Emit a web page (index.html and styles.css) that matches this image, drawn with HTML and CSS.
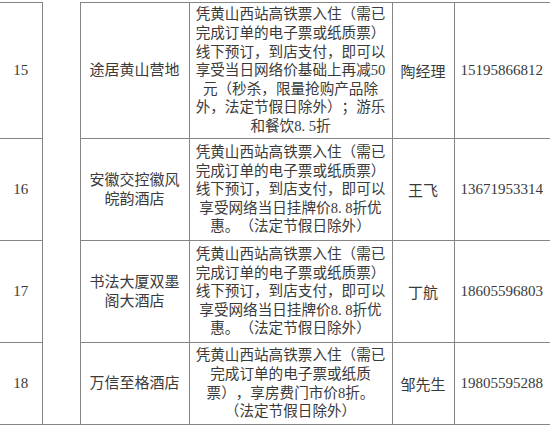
FILE: index.html
```html
<!DOCTYPE html>
<html lang="zh">
<head>
<meta charset="utf-8">
<link rel="stylesheet" href="styles.css">
</head>
<body>
<table class="grid">
  <colgroup>
    <col class="c-no"><col class="c-blank"><col class="c-name"><col class="c-desc"><col class="c-contact"><col class="c-phone">
  </colgroup>
  <tr class="r15">
    <td class="no">15</td>
    <td class="merged" rowspan="4"></td>
    <td class="name">途居黄山营地</td>
    <td class="desc">凭黄山西站高铁票入住（需已<br>完成订单的电子票或纸质票）<br>线下预订，到店支付，即可以<br>享受当日网络价基础上再减50<br>元（秒杀，限量抢购产品除<br>外，法定节假日除外）；游乐<br>和餐饮8<span class="dot">.</span>5折</td>
    <td class="contact">陶经理</td>
    <td class="phone">15195866812</td>
  </tr>
  <tr class="r16">
    <td class="no">16</td>
    <td class="name">安徽交控徽风<br>皖韵酒店</td>
    <td class="desc">凭黄山西站高铁票入住（需已<br>完成订单的电子票或纸质票）<br>线下预订，到店支付，即可以<br>享受网络当日挂牌价8<span class="dot">.</span>8折优<br>惠。（法定节假日除外）</td>
    <td class="contact">王飞</td>
    <td class="phone">13671953314</td>
  </tr>
  <tr class="r17">
    <td class="no">17</td>
    <td class="name">书法大厦双墨<br>阁大酒店</td>
    <td class="desc">凭黄山西站高铁票入住（需已<br>完成订单的电子票或纸质票）<br>线下预订，到店支付，即可以<br>享受网络当日挂牌价8<span class="dot">.</span>8折优<br>惠。（法定节假日除外）</td>
    <td class="contact">丁航</td>
    <td class="phone">18605596803</td>
  </tr>
  <tr class="r18">
    <td class="no">18</td>
    <td class="name">万信至格酒店</td>
    <td class="desc">凭黄山西站高铁票入住（需已<br>完成订单的电子票或纸质<br>票），享房费门市价8折。<br>（法定节假日除外）</td>
    <td class="contact">邹先生</td>
    <td class="phone">19805595288</td>
  </tr>
</table>
</body>
</html>
```
FILE: styles.css
```css
html, body {
  margin: 0;
  padding: 0;
  background: #ffffff;
}
body {
  width: 550px;
  height: 427px;
  overflow: hidden;
}
.grid {
  margin-top: 2px;
  border-collapse: collapse;
  table-layout: fixed;
  width: 553px;
  font-family: "Liberation Serif", "Noto Sans CJK SC", serif;
  color: #3a3a3a;
  text-spacing-trim: space-all;
}
.c-no { width: 42px; }
.c-blank { width: 38px; }
.c-name { width: 109px; }
.c-desc { width: 203px; }
.c-contact { width: 62px; }
.c-phone { width: 99px; }
.grid td {
  border: 1px solid #858585;
  padding: 0;
  text-align: center;
  vertical-align: middle;
}
.grid td.merged {
  border-top: none;
}
.grid td.no:first-child {
  border-left: none;
}
.r15 td { height: 135px; }
.r16 td { height: 101px; }
.r17 td { height: 101px; }
.r18 td { height: 81px; }
.no {
  font-size: 15px;
}
.name {
  font-size: 15px;
  line-height: 19px;
}
.desc {
  font-size: 14.6px;
  line-height: 18.6px;
  white-space: nowrap;
  text-spacing-trim: space-all;
}
.dot {
  padding-right: 3.6px;
}
.contact {
  font-size: 15px;
}
.grid td.phone {
  font-size: 15px;
  text-align: left;
  padding-left: 6px;
}
```
